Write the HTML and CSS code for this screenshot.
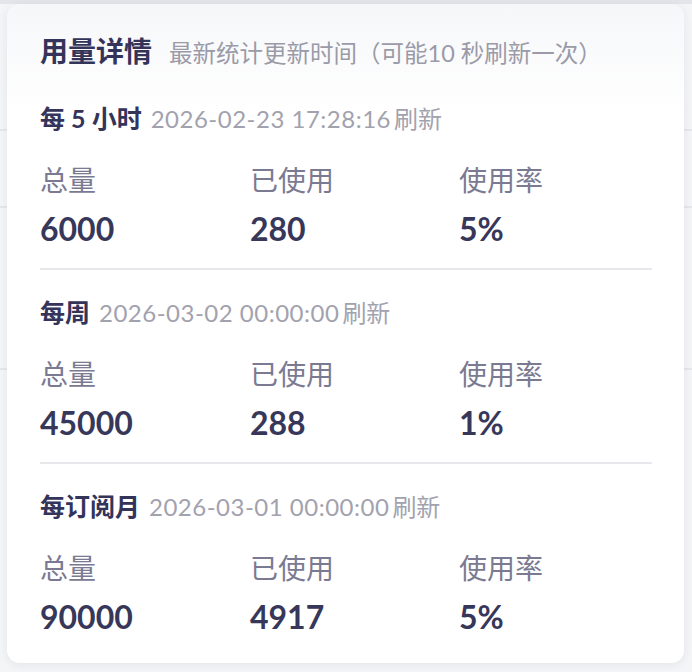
FILE: index.html
```html
<!DOCTYPE html>
<html lang="zh-CN">
<head>
    <meta charset="UTF-8">
    <meta name="viewport" content="width=device-width, initial-scale=1.0">
    <title>用量详情</title>
    <link rel="stylesheet" href="styles.css">
</head>
<body>
    <!-- 页面底层列表（被弹层盖住） -->
    <div class="page">
        <div class="page-top"></div>
        <div class="page-row row-a"></div>
        <div class="page-row row-b"></div>
        <div class="page-row row-c"></div>
    </div>

    <!-- 用量详情弹层 -->
    <div class="usage-card">
        <div class="usage-head">
            <span class="usage-title">用量详情</span>
            <span class="usage-sub">最新统计更新时间（可能10 秒刷新一次）</span>
        </div>

        <div class="period">
            <div class="period-head">
                <span class="period-name">每 5 小时</span>
                <span class="period-time">2026-02-23 17:28:16<span class="refresh">刷新</span></span>
            </div>
            <div class="stats">
                <div class="stat-label">总量</div>
                <div class="stat-label">已使用</div>
                <div class="stat-label">使用率</div>
                <div class="stat-value">6000</div>
                <div class="stat-value">280</div>
                <div class="stat-value">5%</div>
            </div>
        </div>

        <div class="period">
            <div class="period-head">
                <span class="period-name">每周</span>
                <span class="period-time">2026-03-02 00:00:00<span class="refresh">刷新</span></span>
            </div>
            <div class="stats">
                <div class="stat-label">总量</div>
                <div class="stat-label">已使用</div>
                <div class="stat-label">使用率</div>
                <div class="stat-value">45000</div>
                <div class="stat-value">288</div>
                <div class="stat-value">1%</div>
            </div>
        </div>

        <div class="period">
            <div class="period-head">
                <span class="period-name">每订阅月</span>
                <span class="period-time">2026-03-01 00:00:00<span class="refresh">刷新</span></span>
            </div>
            <div class="stats">
                <div class="stat-label">总量</div>
                <div class="stat-label">已使用</div>
                <div class="stat-label">使用率</div>
                <div class="stat-value">90000</div>
                <div class="stat-value">4917</div>
                <div class="stat-value">5%</div>
            </div>
        </div>
    </div>
</body>
</html>
```

FILE: styles.css
```css
/* 基础 */
body {
    margin: 0;
    background: #f4f5f7;
    font-family: 'Lato', 'Noto Sans CJK SC', sans-serif;
    color: #37375a;
    height: 672px;
    overflow: hidden;
}

/* 底层页面 */
.page-top {
    height: 4px;
    background: #e4e5ea;
}

.page-row {
    border-bottom: 2px solid #e6e7eb;
}

.row-a { height: 125px; }
.row-b { height: 75px; }
.row-c { height: 160px; }

/* 弹层卡片 */
.usage-card {
    position: absolute;
    left: 7px;
    top: 4px;
    width: 677px;
    height: 659px;
    box-sizing: border-box;
    padding: 27px 32px 0 33px;
    border-radius: 13px;
    background: linear-gradient(to bottom, #f6f7f9 0, #ffffff 110px);
    box-shadow: 0 2px 10px rgba(40, 40, 70, 0.08);
}

.usage-head {
    display: flex;
    align-items: baseline;
    gap: 17px;
    line-height: 40px;
    margin-bottom: 28px;
}

.usage-title {
    font-size: 28px;
    font-weight: 700;
    color: #34345a;
}

.usage-sub {
    font-size: 23.5px;
    color: #9a9aa8;
}

/* 每个周期 */
.period {
    padding-bottom: 19px;
    border-bottom: 2px solid #e8e8ec;
    margin-bottom: 25px;
}

.period:last-child {
    border-bottom: none;
    margin-bottom: 0;
}

.period-head {
    display: flex;
    align-items: baseline;
    gap: 9px;
    line-height: 34px;
    margin-bottom: 24px;
}

.period-name {
    font-size: 25px;
    font-weight: 700;
    color: #34345a;
}

.period-time {
    font-size: 24px;
    letter-spacing: 0.5px;
    color: #a2a2ae;
}

.refresh {
    margin-left: 3px;
    letter-spacing: 0;
}

.stats {
    display: grid;
    grid-template-columns: 210px 209px 1fr;
    row-gap: 9px;
}

.stat-label {
    font-size: 28px;
    line-height: 40px;
    color: #7a7a92;
}

.stat-value {
    font-size: 32px;
    font-weight: 700;
    line-height: 40px;
    color: #37375a;
}
```
